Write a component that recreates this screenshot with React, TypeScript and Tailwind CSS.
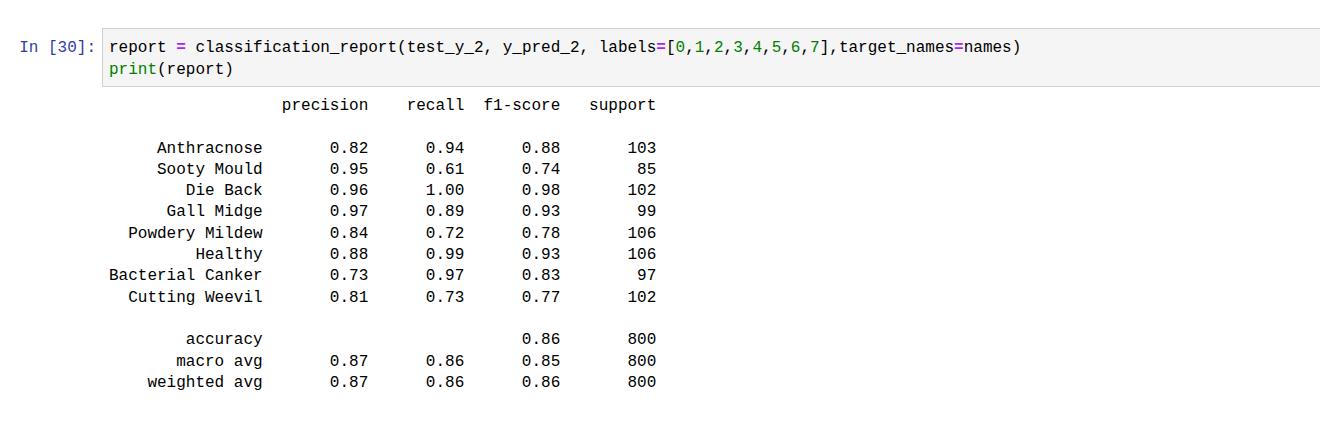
import React from 'react';

const mono = { fontFamily: '"Liberation Mono", "DejaVu Sans Mono", monospace' };

// sklearn classification_report text, width = 16, digits = 2
const rows: [string, string, string, string, string][] = [
  ['Anthracnose', '0.82', '0.94', '0.88', '103'],
  ['Sooty Mould', '0.95', '0.61', '0.74', '85'],
  ['Die Back', '0.96', '1.00', '0.98', '102'],
  ['Gall Midge', '0.97', '0.89', '0.93', '99'],
  ['Powdery Mildew', '0.84', '0.72', '0.78', '106'],
  ['Healthy', '0.88', '0.99', '0.93', '106'],
  ['Bacterial Canker', '0.73', '0.97', '0.83', '97'],
  ['Cutting Weevil', '0.81', '0.73', '0.77', '102'],
];

const pad = (s: string, n: number) => s.padStart(n, ' ');

function buildReport() {
  const w = 16;
  let out = pad('', w) + ' ' + ['precision', 'recall', 'f1-score', 'support'].map((h) => ' ' + pad(h, 9)).join('') + '\n\n';
  for (const r of rows) {
    out += pad(r[0], w) + ' ' + r.slice(1).map((v) => ' ' + pad(v, 9)).join('') + '\n';
  }
  out += '\n';
  out += pad('accuracy', w) + ' ' + ' ' + pad('', 9) + ' ' + pad('', 9) + ' ' + pad('0.86', 9) + ' ' + pad('800', 9) + '\n';
  out += pad('macro avg', w) + ' ' + ['0.87', '0.86', '0.85', '800'].map((v) => ' ' + pad(v, 9)).join('') + '\n';
  out += pad('weighted avg', w) + ' ' + ['0.87', '0.86', '0.86', '800'].map((v) => ' ' + pad(v, 9)).join('');
  return out;
}

function Op({ children }: { children: React.ReactNode }) {
  return <span className="font-bold text-[#AA22FF]">{children}</span>;
}

function Num({ children }: { children: React.ReactNode }) {
  return <span className="text-[#008000]">{children}</span>;
}

export default function App() {
  return (
    <div className="w-[1320px] h-[427px] bg-white overflow-hidden pt-[28px] text-[16px] leading-[21.3px]" style={mono}>
      {/* Input cell */}
      <div className="flex">
        <div className="w-[102px] shrink-0 pr-[6px] pt-[9px] text-right leading-[22px] text-[#303F9F]">In&nbsp;[30]:</div>
        <div className="flex-1 border border-r-0 border-[#cfcfcf] bg-[#f5f5f5] pl-[6px] pt-[8px] pb-[5px] leading-[22px] text-[#000]">
          <pre className="m-0" style={mono}>
            report <Op>=</Op> classification_report(test_y_2, y_pred_2, labels<Op>=</Op>[
            <Num>0</Num>,<Num>1</Num>,<Num>2</Num>,<Num>3</Num>,<Num>4</Num>,<Num>5</Num>,<Num>6</Num>,<Num>7</Num>
            ],target_names<Op>=</Op>names)
            {'\n'}
            <span className="text-[#008000]">print</span>(report)
          </pre>
        </div>
      </div>

      {/* Output */}
      <div className="pl-[109px] pt-[9px]">
        <pre className="m-0 text-[#000]" style={mono}>{buildReport()}</pre>
      </div>
    </div>
  );
}
